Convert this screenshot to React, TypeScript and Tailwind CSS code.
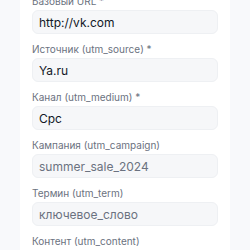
import React from 'react';

const fields = [
  { label: 'Базовый URL *', value: 'http://vk.com', filled: true },
  { label: 'Источник (utm_source) *', value: 'Ya.ru', filled: true },
  { label: 'Канал (utm_medium) *', value: 'Cpc', filled: true },
  { label: 'Кампания (utm_campaign)', value: 'summer_sale_2024', filled: false },
  { label: 'Термин (utm_term)', value: 'ключевое_слово', filled: false },
  { label: 'Контент (utm_content)', value: '', filled: false },
];

export default function App() {
  return (
    <div className="w-[250px] h-[250px] overflow-hidden bg-[#f8f9fb] px-5 font-['Inter',sans-serif]">
      <div className="bg-white px-3 -mt-[6px] h-[290px] flex flex-col gap-[8px]">
        {fields.map((f) => (
          <div key={f.label} className="flex flex-col">
            <label className="text-[10px] leading-[14px] text-[#6b7280] mb-[2px]">{f.label}</label>
            {f.value !== '' ? (
              <input
                readOnly
                value={f.filled ? f.value : ''}
                placeholder={f.filled ? '' : f.value}
                className="h-6 w-full rounded-[6px] border border-[#eef0f3] bg-[#f6f7f9] px-[6px] font-['Inter',sans-serif] text-[12px] text-[#111827] placeholder:text-[#6b7280] outline-none"
              />
            ) : (
              <div className="h-6" />
            )}
          </div>
        ))}
      </div>
    </div>
  );
}
